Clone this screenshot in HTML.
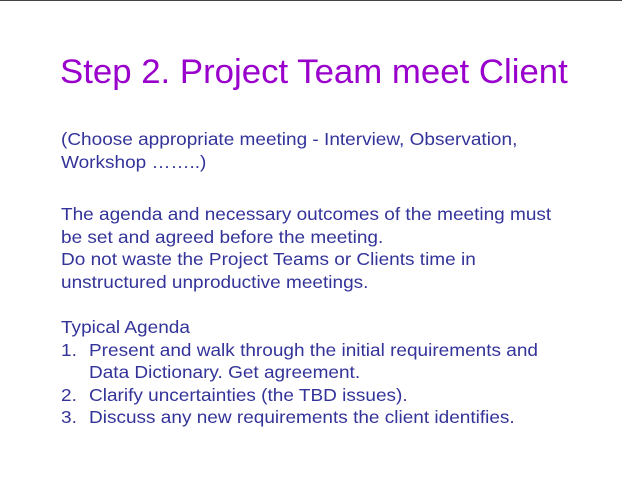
<!DOCTYPE html>
<html><head><style>
body{margin:0;width:622px;height:478px;background:#fff;position:relative;overflow:hidden;font-family:"Liberation Sans",sans-serif;}
.top{position:absolute;left:0;top:0;width:622px;height:1px;background:#444;}
.t{position:absolute;left:60px;top:50px;font-size:34px;line-height:44px;color:#9900cc;white-space:nowrap;transform-origin:0 0;transform:scaleX(1.023);}
.l{position:absolute;left:61px;font-size:17.5px;line-height:22px;color:#333399;white-space:nowrap;transform-origin:0 0;transform:scaleX(1.086);}
.i{left:89px;}
</style></head><body>
<div class="top"></div>
<div class="t">Step 2. Project Team meet Client</div>
<div class="l" style="top:128px">(Choose appropriate meeting - Interview, Observation,</div>
<div class="l" style="top:151px">Workshop ……..)</div>
<div class="l" style="top:203px">The agenda and necessary outcomes of the meeting must</div>
<div class="l" style="top:226px">be set and agreed before the meeting.</div>
<div class="l" style="top:248px">Do not waste the Project Teams or Clients time in</div>
<div class="l" style="top:271px">unstructured unproductive meetings.</div>
<div class="l" style="top:316px">Typical Agenda</div>
<div class="l" style="top:339px">1.</div><div class="l i" style="top:339px">Present and walk through the initial requirements and</div>
<div class="l i" style="top:361px">Data Dictionary. Get agreement.</div>
<div class="l" style="top:384px">2.</div><div class="l i" style="top:384px">Clarify uncertainties (the TBD issues).</div>
<div class="l" style="top:406px">3.</div><div class="l i" style="top:406px">Discuss any new requirements the client identifies.</div>
</body></html>
